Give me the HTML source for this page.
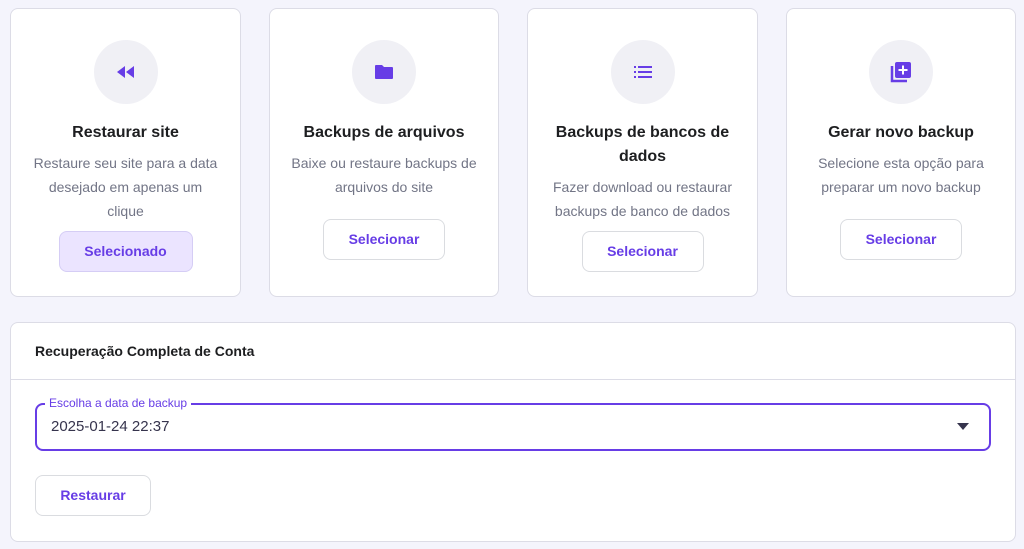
<!DOCTYPE html><html><head><style>
body{margin:0;width:1024px;height:549px;background:#f4f4fc;font-family:"Liberation Sans",sans-serif;position:relative;overflow:hidden}
.card{position:absolute;top:8px;height:289px;background:#fff;border:1px solid #dcdce6;border-radius:8px;box-sizing:border-box;text-align:center}
.circ{position:absolute;left:50%;top:31px;margin-left:-32px;width:64px;height:64px;border-radius:50%;background:#f0f0f5;display:flex;align-items:center;justify-content:center}
.t{position:absolute;left:0;right:0;top:112px;font-size:16px;font-weight:bold;color:#1d1e20;line-height:24px}
.d{position:absolute;left:0;right:0;font-size:14px;color:#727586;line-height:24px;white-space:nowrap}
.btn{position:absolute;left:50%;margin-left:-61px;width:122px;height:41px;box-sizing:border-box;border:1px solid #dadce0;border-radius:8px;font-size:14px;font-weight:bold;color:#673de6;line-height:39px;background:#fff;text-align:center}
.sel{background:#ebe4ff;width:134px;margin-left:-67px;border-color:#d5cdf5}
</style></head><body>
<div class="card" style="left:10px;width:231px">
<div class="circ"><svg width="20" height="14" viewBox="0 0 20 14"><path d="M1 7l8-6v12zM10 7l8-6v12z" fill="#673de6"/></svg></div>
<div class="t">Restaurar site</div>
<div class="d" style="top:142px">Restaure seu site para a data<br>desejado em apenas um<br>clique</div>
<div class="btn sel" style="top:222px">Selecionado</div></div>
<div class="card" style="left:269px;width:230px">
<div class="circ"><svg width="20" height="16" viewBox="0 0 20 16"><path d="M1 2a1 1 0 0 1 1-1h6l2 2h8a1 1 0 0 1 1 1v10a1 1 0 0 1-1 1H2a1 1 0 0 1-1-1z" fill="#673de6"/></svg></div>
<div class="t">Backups de arquivos</div>
<div class="d" style="top:142px">Baixe ou restaure backups de<br>arquivos do site</div>
<div class="btn" style="top:210px">Selecionar</div></div>
<div class="card" style="left:527px;width:231px">
<div class="circ"><svg width="18" height="12" viewBox="0 0 18 12"><path d="M0 1h2M4 1h14M0 6h2M4 6h14M0 11h2M4 11h14" stroke="#673de6" stroke-width="2"/></svg></div>
<div class="t">Backups de bancos de<br>dados</div>
<div class="d" style="top:166px">Fazer download ou restaurar<br>backups de banco de dados</div>
<div class="btn" style="top:222px">Selecionar</div></div>
<div class="card" style="left:786px;width:230px">
<div class="circ"><svg width="22" height="22" viewBox="0 0 22 22"><path d="M2 5v15h15" stroke="#673de6" stroke-width="2.5" fill="none"/><rect x="5" y="1" width="16" height="16" rx="2" fill="#673de6"/><path d="M13 4.5v9M8.5 9h9" stroke="#fff" stroke-width="2"/></svg></div>
<div class="t">Gerar novo backup</div>
<div class="d" style="top:142px">Selecione esta opção para<br>preparar um novo backup</div>
<div class="btn" style="top:210px">Selecionar</div></div>
<div style="position:absolute;left:10px;top:322px;width:1006px;height:220px;background:#fff;border:1px solid #dcdce6;border-radius:8px;box-sizing:border-box">
<div style="height:56px;border-bottom:1px solid #dcdce6;font-size:14px;font-weight:bold;color:#1d1e20;line-height:56px;padding-left:24px">Recuperação Completa de Conta</div>
<div style="position:absolute;left:24px;top:80px;width:956px;height:48px;border:2px solid #673de6;border-radius:8px;box-sizing:border-box">
<span style="position:absolute;left:8px;top:-10px;background:#fff;padding:0 4px;font-size:12px;color:#673de6;line-height:16px">Escolha a data de backup</span>
<span style="position:absolute;left:14px;top:13px;font-size:15px;color:#36344d">2025-01-24 22:37</span>
<svg style="position:absolute;right:20px;top:18px" width="12" height="7"><path d="M0 0h12L6 7z" fill="#36344d"/></svg></div>
<div class="btn" style="left:24px;margin-left:0;top:152px;width:116px">Restaurar</div>
</div>
</body></html>
